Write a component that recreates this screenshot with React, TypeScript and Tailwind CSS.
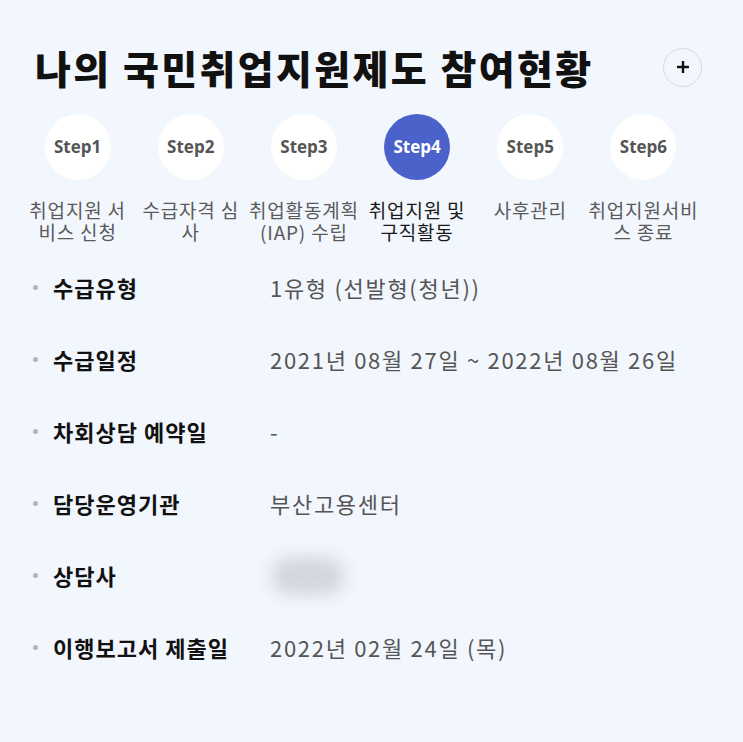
import React from 'react';

const steps = [
  { name: 'Step1', label: ['취업지원 서', '비스 신청'] },
  { name: 'Step2', label: ['수급자격 심', '사'] },
  { name: 'Step3', label: ['취업활동계획', '(IAP) 수립'] },
  { name: 'Step4', label: ['취업지원 및', '구직활동'] },
  { name: 'Step5', label: ['사후관리'] },
  { name: 'Step6', label: ['취업지원서비', '스 종료'] },
];

const current = 'Step4';

const rows: { label: string; value: string | null }[] = [
  { label: '수급유형', value: '1유형 (선발형(청년))' },
  { label: '수급일정', value: '2021년 08월 27일 ~ 2022년 08월 26일' },
  { label: '차회상담 예약일', value: '-' },
  { label: '담당운영기관', value: '부산고용센터' },
  { label: '상담사', value: null },
  { label: '이행보고서 제출일', value: '2022년 02월 24일 (목)' },
];

const kr = { fontFamily: '"Noto Sans CJK KR", "Noto Sans", sans-serif' };

export default function App() {
  return (
    <div className="min-h-[742px] w-[743px] bg-[#f2f6fd]" style={kr}>
      <div className="pl-[35px] pr-[41px] pt-[44px]">
        <div className="flex items-center justify-between h-[46px]">
          <h1 className="text-[39px] leading-[46px] font-black text-[#111] tracking-[2.4px] whitespace-nowrap">
            나의 국민취업지원제도 참여현황
          </h1>
          <button className="w-[39px] h-[39px] rounded-full border border-[#d6d9e0] flex items-center justify-center">
            <svg width="14" height="14" viewBox="0 0 14 14">
              <path d="M7 1v12M1 7h12" stroke="#111" strokeWidth="2.4" />
            </svg>
          </button>
        </div>
      </div>

      <div className="ml-[21px] w-[679px] mt-[24px] grid grid-cols-6">
        {steps.map(s => {
          const active = s.name === current;
          return (
            <div key={s.name} className="flex flex-col items-center">
              <div
                className={`w-[66px] h-[66px] rounded-full flex items-center justify-center text-[17px] font-bold ${
                  active ? 'bg-[#4a62c9] text-white' : 'bg-white text-[#555]'
                }`}
                style={{ fontFamily: '"Open Sans", sans-serif' }}
              >
                {s.name}
              </div>
              <p
                className={`mt-[19px] text-[19px] leading-[22px] tracking-[0.8px] text-center whitespace-nowrap ${
                  active ? 'text-[#1a1a1a]' : 'text-[#5a5a5a]'
                }`}
              >
                {s.label[0]}
                {s.label[1] && (
                  <>
                    <br />
                    {s.label[1]}
                  </>
                )}
              </p>
            </div>
          );
        })}
      </div>

      <div className="mt-[8px] pl-[33px]">
        {rows.map(r => (
          <div key={r.label} className="h-[72px] flex items-center">
            <span className="w-[5px] h-[5px] rounded-full bg-[#b4b4b4] mr-[15px]" />
            <span className="w-[217px] text-[22px] font-bold text-[#111] tracking-[1px] whitespace-nowrap">
              {r.label}
            </span>
            {r.value !== null ? (
              <span className="text-[22px] text-[#555] tracking-[1.7px] whitespace-nowrap">{r.value}</span>
            ) : (
              <span className="relative w-[90px] h-[48px]">
                <span className="absolute left-[2px] top-[6px] w-[72px] h-[38px] rounded-full bg-[#d3d6dc] blur-[8px]" />
              </span>
            )}
          </div>
        ))}
      </div>
    </div>
  );
}
